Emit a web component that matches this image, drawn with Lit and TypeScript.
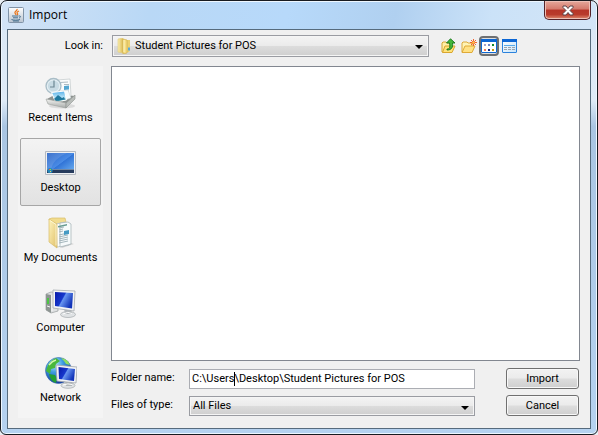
import { LitElement, html, svg, css } from "lit";
import { customElement, state, query } from "lit/decorators.js";
import { classMap } from "lit/directives/class-map.js";
import { styleMap } from "lit/directives/style-map.js";

const javaCup = svg`
  <defs><linearGradient id="jv" x2="0" y2="1"><stop stop-color="#fff"/><stop offset="1" stop-color="#b9c4d0"/></linearGradient></defs>
  <rect x=".5" y=".5" width="15" height="15" rx="1" fill="url(#jv)" stroke="#8194a8"/>
  <path d="M9 2c1 1.500-3 2.500-2 4 .3.700 1 1 .8 2M11 4c-2 .8-2.500 1.600-1.500 2.600.5.600 0 1-.5 1.400" fill="none" stroke="#e8771e" stroke-width="1.300"/>
  <path d="M4 9h6.500M5 10.800h5M11 9c2-.5 2 1.500 0 2M3.500 12.500c1.500.9 6.500.9 8.500 0M5 14h6" fill="none" stroke="#47708f"/>`;

const folderSmall = svg`
  <defs><linearGradient id="fs"><stop stop-color="#f9eeb0"/><stop offset="1" stop-color="#dcb94e"/></linearGradient></defs>
  <path d="M2 1l5-1v15l-5-1z" fill="url(#fs)" stroke="#e3cc78" stroke-width=".6"/>
  <path d="M9 2h5v10l-1 2-4 1z" fill="#ecd070"/>
  <path d="M7 1l4 1v13l-4 1z" fill="#f5dd83" stroke="#c9a743" stroke-width=".6"/>
  <path d="M12 9.500h2v3h-2z" fill="#58a9df"/><path d="M8 2v12" stroke="#fff6c4"/>`;

const upFolder = svg`
  <path d="M1 5l1-1h3l1 1h4v9H1z" fill="#fff0a8" stroke="#d5a637"/>
  <path d="M1.500 14.500L4 8h10l-3 6.500z" fill="#ffe27a" stroke="#d9a62e"/>
  <path d="M6 11c3 0 3-2 2.500-6H5.500L9.500.8 14 5h-2.500c.5 4-.5 7-5.500 7z" fill="#44b83b" stroke="#16731b" stroke-width=".9"/>`;

const newFolder = svg`
  <path d="M1 5l1-1h4l1 1h4v9H1z" fill="#fff3b5" stroke="#dca93c"/>
  <path d="M1 14.500L4 8h10l-3 6.500z" fill="#ffe184" stroke="#dfaa37"/>
  <path d="M12.500 1v7M9 4.500h7M10 2l5 5M15 2l-5 5" stroke="#f2541b" stroke-width=".9"/>
  <circle cx="12.500" cy="4.500" r="1.300" fill="#ffc04a"/>`;

const listView = svg`
  <rect x=".5" y="1.500" width="15" height="13" rx=".5" fill="#fff" stroke="#0f68d0"/>
  <path d="M0 1h16v3H0z" fill="#0c66d4"/>
  <path d="M3 6h2v2H3z" fill="#a4a4cb"/><path d="M7 6h2v2H7z" fill="#6f86c9"/><path d="M11 6h2v2h-2z" fill="#12882b"/>
  <path d="M3 11h2v2H3z" fill="#f37c55"/><path d="M7 11h2v2H7z" fill="#132b87"/><path d="M11 11h2v2h-2z" fill="#c99a10"/>`;

const detailView = svg`
  <defs><linearGradient id="dv" x2="1" y2="1"><stop stop-color="#fff"/><stop offset="1" stop-color="#c6e3fa"/></linearGradient></defs>
  <rect x="1.500" y="1.500" width="14" height="13" rx=".5" fill="url(#dv)" stroke="#2b82dc"/>
  <path d="M1 1h15v3H1z" fill="#0c66d4"/>
  <path d="M3 7.500h11" stroke="#57a9e8"/>
  <path d="M3 9.500h3m1 0h3m1 0h3M3 11.500h3m1 0h3m1 0h3" stroke="#9aa3ad"/>`;

const recent = svg`
  <defs>
    <linearGradient id="rt" x2="0" y2="1"><stop stop-color="#f4f4f2"/><stop offset="1" stop-color="#a6aaa8"/></linearGradient>
    <linearGradient id="rp" x2="0" y2="1"><stop stop-color="#52aee9"/><stop offset=".6" stop-color="#bde5f7"/><stop offset="1" stop-color="#238e8f"/></linearGradient>
  </defs>
  <ellipse cx="17" cy="29" rx="13" ry="2.500" fill="#000" opacity=".1"/>
  <path d="M2 22l9-5 19 2-8 8-18-3z" fill="#8d9290"/>
  <path d="M12 3l13-1 1 17-12 2z" fill="#fcfdfd" stroke="#c2c8ca" stroke-width=".7"/>
  <path d="M15 5.500l8-.5M19 7.500h5M19 14h5M19 16h5" stroke="#9babb4" stroke-width=".8"/>
  <path d="M19 9l5-.4v4l-5 .4z" fill="#55a7d1"/>
  <circle cx="8.500" cy="9" r="7.500" fill="#e3eef3" stroke="#a9bdc7" stroke-width="1.300"/>
  <circle cx="8.500" cy="9" r="5.600" fill="#c8dbe4"/>
  <path d="M9 3.500V10H5" fill="none" stroke="#6d8793" stroke-width="1.200"/>
  <path d="M14 14l9-1 3 8-9 3z" fill="#f7fbfc" stroke="#c4cccf" stroke-width=".5"/>
  <path d="M6.500 15.500l13-1.500 2 9-11 2z" fill="url(#rp)" stroke="#fff"/>
  <path d="M9 22l4-4 4 3 2-1 1 2.500-9 1.500z" fill="#1e789f"/>
  <path d="M1 22l20 4v5L3 27z" fill="url(#rt)" stroke="#9a9f9c" stroke-width=".6"/>
  <path d="M21 26l9-8v4l-9 9z" fill="#b9bdba" stroke="#8a908d" stroke-width=".6"/>`;

const desktop = svg`
  <defs><linearGradient id="dk" x2="1" y2="1"><stop stop-color="#235fc5"/><stop offset=".5" stop-color="#4a8be5"/><stop offset=".52" stop-color="#3174d7"/><stop offset="1" stop-color="#72b4f2"/></linearGradient></defs>
  <path d="M.5 4.500h30v23H.5z" fill="#eef0f2" stroke="#b4b9c1"/>
  <path d="M2 6h27v20H2z" fill="url(#dk)"/>
  <path d="M2 6h20Q8 12 6 22H2z" fill="#fff" opacity=".12"/>
  <path d="M2 22h27v4H2z" fill="#263b5d"/><path d="M2 22h27v1H2z" fill="#7188a4"/>
  <circle cx="5" cy="23.500" r="2.600" fill="#2588ba"/><path d="M4 22h1v1H4z" fill="#f06437"/><path d="M5 22h1v1H5z" fill="#95d350"/><path d="M5 24h1v1H5z" fill="#f8ce48"/>`;

const documents = svg`
  <defs><linearGradient id="df" x2="1" y2="1"><stop stop-color="#fff4bd"/><stop offset="1" stop-color="#dfc06a"/></linearGradient></defs>
  <path d="M14 29l12-3 3 1-12 4z" opacity=".13"/>
  <path d="M4 2l3-1h13l1 4v21l-9 3z" fill="#f1dc8e" stroke="#d8bd68" stroke-width=".7"/>
  <path d="M11 7l9-2 4 2v21l-12 2z" fill="#fdfefe" stroke="#adb9bd" stroke-width=".7"/>
  <path d="M15 6l8-1 3 2v20l-11 3z" fill="#f6fafb" stroke="#a2afb3" stroke-width=".7"/>
  <path d="M14 11l5-1M14 13l4-1M14 15l4-1M14 18l9-2M14 20l9-2M14 22l9-2M14 24l9-2M14 26l9-2" stroke="#91a5ac" stroke-width=".8"/>
  <path d="M19 14l5-1v4l-5 1z" fill="#459ac3"/><path d="M13 9l9-2v1.500l-9 2z" fill="#669a91"/>
  <path d="M4 2l8 5v24L4 25z" fill="url(#df)" stroke="#d8bc67" stroke-width=".7"/>
  <path d="M5 3.500l6 4v21" fill="none" stroke="#fffbe0" stroke-width=".8"/>`;

const screen = (id: string) => svg`
  <defs><linearGradient id=${id} x2="1" y2=".5"><stop stop-color="#0719a9"/><stop offset=".48" stop-color="#1738cc"/><stop offset=".54" stop-color="#6795f0"/><stop offset="1" stop-color="#1234b9"/></linearGradient></defs>`;

const computer = svg`
  ${screen("cs")}
  <path d="M1 7l5-2 7 1v18l-7 2-5-3z" fill="#dfe1e2" stroke="#a0a4a6" stroke-width=".8"/>
  <path d="M1 7l5 1v18l-5-3z" fill="#8d9592"/><path d="M3 11v6" stroke="#4cc544" stroke-width="2"/>
  <path d="M7 8v16M2 19l3 1" stroke="#f8f8f8"/>
  <ellipse cx="23" cy="27.500" rx="7.500" ry="3" fill="#dfe2e4" stroke="#a4a9ac" stroke-width=".7"/>
  <path d="M19 21l7 1 1 5h-7z" fill="#b4b9bc"/><path d="M18 27q5-3 9-.5" fill="none" stroke="#fff"/>
  <path d="M8 3l22 1-1 20-21-3z" fill="#f2f3f5" stroke="#a6abaf" stroke-width=".8"/>
  <path d="M10 5l18 1-1 15.500-17-2.500z" fill="url(#cs)"/>`;

const network = svg`
  ${screen("ns")}
  <defs><radialGradient id="gl" cx=".35" cy=".25" r=".8"><stop stop-color="#bceeff"/><stop offset=".4" stop-color="#3d9ce0"/><stop offset="1" stop-color="#102f9c"/></radialGradient></defs>
  <circle cx="13.500" cy="13.500" r="13" fill="url(#gl)" stroke="#356aa8" stroke-width=".6"/>
  <path d="M3 8Q6 3 11 1l4 3-4 3-1 4-4 1-1 5-4-3z" fill="#49b83c"/>
  <path d="M16 1q7 1 9 7l-4-1-2-3z" fill="#8ede5f"/><path d="M4 17l6 1 2 4-1 4q-6-2-7-9z" fill="#239e35"/>
  <path d="M4 8q3-4 7-5" fill="none" stroke="#d1f7af" stroke-width="1.300"/>
  <ellipse cx="23" cy="28.500" rx="7" ry="2.800" fill="#dfe2e4" stroke="#a4a9ac" stroke-width=".7"/>
  <path d="M20 24l7 1v4h-6z" fill="#b1b6b9"/><path d="M18 28q5-2 9-.5" fill="none" stroke="#fff"/>
  <path d="M11 8l21 2-1 16-19-2z" fill="#f2f3f5" stroke="#a0a5a9" stroke-width=".8"/>
  <path d="M13.500 10l16.500 2-1 12-15-2z" fill="url(#ns)"/>`;

const places = [
  { label: "Recent Items", icon: recent },
  { label: "Desktop", icon: desktop },
  { label: "My Documents", icon: documents },
  { label: "Computer", icon: computer },
  { label: "Network", icon: network },
];

@customElement("app-root")
export class ImportDialog extends LitElement {
  @state() private place = "Desktop";
  @state() private view = "list";
  @state() private caretLeft = 0;
  @query("#folder") private folder!: HTMLInputElement;

  static styles = css`
    * { box-sizing: border-box; }
    :host {
      display: flex;
      min-height: 100vh;
      background: #e9eef3;
      font: 11px/14px Roboto, sans-serif;
      color: #000;
    }
    button, input, select { font: inherit; color: inherit; margin: 0; }
    svg { display: block; flex: none; }
    .window {
      flex: 1;
      display: flex;
      flex-direction: column;
      padding: 0 6px 5px;
      border: 1px solid #181b20;
      border-radius: 7px 7px 6px 6px;
      background:
        linear-gradient(100deg, #d3e3f5, #b9d8f6 25%, #b7d9fa 48%, #b0d0f0 66%, #cbe2f8 82%, #d3e5f7) 0 0 / 100% 29px no-repeat,
        linear-gradient(#d9e7f5, #dfebf7 23%, #a9c5e2 29%, #b5d2f0);
      box-shadow: inset 0 0 0 1px #eef7ff;
    }
    .titlebar {
      height: 28px;
      display: flex;
      align-items: center;
      gap: 5px;
      padding-left: 1px;
    }
    h1 { flex: 1; margin: 0; font: 12px/16px "Open Sans", sans-serif; }
    .close {
      align-self: flex-start;
      width: 47px;
      height: 19px;
      display: grid;
      place-items: center;
      padding: 0;
      border: 1px solid #54232a;
      border-top: 0;
      border-radius: 0 0 5px 5px;
      background: linear-gradient(#e5a89b, #d47a6c 45%, #b63528 50%, #b93b2c 75%, #df8b70);
      box-shadow: inset 0 0 0 1px #edbfb5;
    }
    .client {
      flex: 1;
      display: flex;
      flex-direction: column;
      gap: 9px;
      padding: 5px 10px 10px;
      border: 1px solid #566b7d;
      background: #f0f0f0;
    }
    .lookin { display: grid; grid-template-columns: 85px 1fr 80px; column-gap: 9px; align-items: center; padding-right: 62px; }
    .lookin label { text-align: right; }
    .combo {
      position: relative;
      height: 22px;
      border: 1px solid #9a9ca2;
      background: linear-gradient(#f4f4f4, #ebebeb 48%, #dcdcdc 52%, #cfcfcf);
      box-shadow: inset 0 0 0 1px #f5f5f5;
    }
    .combo select {
      appearance: none;
      display: block;
      width: 100%;
      height: 100%;
      padding: 0 20px 0 3px;
      border: 0;
      background: none;
    }
    .combo.pictured select { padding-left: 22px; }
    .combo .folder { position: absolute; left: 3px; top: 2px; pointer-events: none; }
    .combo::after {
      content: "";
      position: absolute;
      right: 5px;
      top: 9px;
      border: 4px solid transparent;
      border-top-color: #000;
      border-bottom: 0;
      pointer-events: none;
    }
    .tools { display: flex; align-items: center; padding-left: 1px; }
    .tool {
      width: 20px;
      height: 20px;
      display: grid;
      place-items: center;
      padding: 0;
      border: 2px solid transparent;
      border-radius: 4px;
      background: none;
    }
    .tool.on { border-color: #6d6f72; background: #dedede; }
    .body { flex: 1; display: grid; grid-template-columns: 85px 1fr; column-gap: 8px; }
    .places { display: flex; flex-direction: column; gap: 2px; padding: 2px; background: #f4f4f4; }
    .place {
      height: 68px;
      display: flex;
      flex-direction: column;
      align-items: center;
      gap: 2px;
      padding: 8px 0 0;
      border: 1px solid transparent;
      border-radius: 2px;
      background: none;
      white-space: nowrap;
    }
    .place.on { border-color: #a6a6a6; background: linear-gradient(#f3f3f3, #e2e2e2); }
    .main { display: flex; flex-direction: column; gap: 7px; min-width: 0; }
    .files { flex: 1; border: 1px solid #828790; background: #fff; }
    .form { display: grid; grid-template-columns: 70px 1fr 73px; column-gap: 8px; row-gap: 6px; align-items: center; padding: 0 1px 2px 0; }
    .form label { padding-bottom: 2px; }
    .field { position: relative; margin-right: 23px; }
    .field input {
      display: block;
      width: 100%;
      height: 20px;
      padding: 0 2px;
      border: 1px solid #abadb3;
      border-radius: 0;
      background: #fff;
      outline: 0;
    }
    .caret { position: absolute; top: 3px; width: 1px; height: 14px; background: #000; }
    .form .combo { height: 20px; margin-right: 23px; }
    .action {
      height: 21px;
      padding: 0;
      border: 1px solid #707070;
      border-radius: 3px;
      background: linear-gradient(#f2f2f2, #ebebeb 48%, #dddddd 52%, #cfcfcf);
      box-shadow: inset 0 0 0 1px #f8f8f8;
    }
  `;

  protected async firstUpdated() {
    await document.fonts.ready;
    const ctx = document.createElement("canvas").getContext("2d")!;
    ctx.font = getComputedStyle(this.folder).font;
    this.caretLeft = Math.round(3 + ctx.measureText("C:\\Users").width);
  }

  private tool(name: string, icon: unknown, toggles = false) {
    return html`<button
      class=${classMap({ tool: true, on: toggles && this.view === name })}
      aria-label=${name}
      @click=${() => { if (toggles) this.view = name; }}
    ><svg width="16" height="16" viewBox="0 0 16 16">${icon}</svg></button>`;
  }

  render() {
    return html`
      <div class="window" role="dialog" aria-labelledby="title">
        <header class="titlebar">
          <svg width="16" height="16" viewBox="0 0 16 16">${javaCup}</svg>
          <h1 id="title">Import</h1>
          <button class="close" aria-label="Close">
            <svg width="12" height="11" viewBox="0 0 12 11">
              <path d="M1 1h3l2 2.500L8 1h3v1.500L8 5.500l3 3V10H8L6 7.500 4 10H1V8.500l3-3-3-3z" fill="#fff" stroke="#5c4549"/>
            </svg>
          </button>
        </header>
        <div class="client">
          <div class="lookin">
            <label for="look">Look in:</label>
            <div class="combo pictured">
              <svg class="folder" width="16" height="16" viewBox="0 0 16 16">${folderSmall}</svg>
              <select id="look"><option>Student Pictures for POS</option></select>
            </div>
            <div class="tools">
              ${this.tool("up", upFolder)}${this.tool("new", newFolder)}${this.tool("list", listView, true)}${this.tool("details", detailView, true)}
            </div>
          </div>
          <div class="body">
            <nav class="places">
              ${places.map((p) => html`<button
                class=${classMap({ place: true, on: this.place === p.label })}
                @click=${() => { this.place = p.label; }}
              ><svg width="32" height="32" viewBox="0 0 32 32">${p.icon}</svg>${p.label}</button>`)}
            </nav>
            <div class="main">
              <div class="files"></div>
              <div class="form">
                <label for="folder">Folder name:</label>
                <div class="field">
                  <input id="folder" type="text" spellcheck="false" value="C:\\Users\\Desktop\\Student Pictures for POS" />
                  <span class="caret" style=${styleMap({ left: `${this.caretLeft}px` })}></span>
                </div>
                <button class="action">Import</button>
                <label for="type">Files of type:</label>
                <div class="combo"><select id="type"><option>All Files</option></select></div>
                <button class="action">Cancel</button>
              </div>
            </div>
          </div>
        </div>
      </div>
    `;
  }
}
